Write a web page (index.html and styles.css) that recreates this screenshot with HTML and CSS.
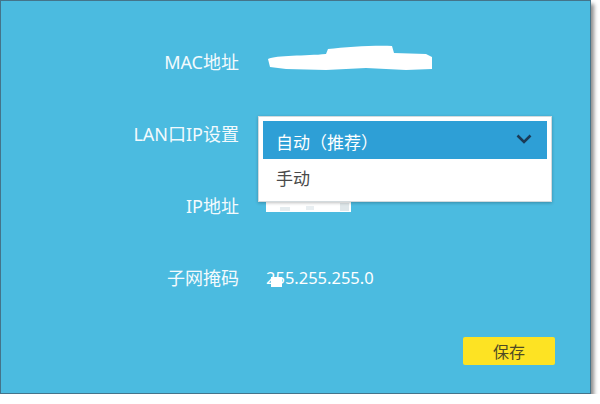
FILE: index.html
```html
<!DOCTYPE html>
<html>
	<head>
		<meta charset="utf-8" />
		<link rel="stylesheet" href="styles.css">
	</head>
	<body>
		<div class="panel">
			<div class="form">
				<div class="label">MAC地址</div>
				<div class="value">
					<svg class="mask-mac" width="170" height="30" viewBox="0 0 170 30">
						<path d="M2,14 C10,10 40,11 60,9 L62,4 C80,2 110,0 126,1 L128,8 L160,9 L166,12 L166,24 L140,25 L100,23 L60,25 L20,24 L4,22 Z" fill="#fff" />
					</svg>
				</div>

				<div class="label">LAN口IP设置</div>
				<div class="value value-select">
					<div class="dropdown">
						<div class="option selected">
							<span>自动（推荐）</span>
							<svg class="check" width="16" height="10" viewBox="0 0 16 10">
								<polyline points="1.5,1.5 8,8 14.5,1.5" fill="none" stroke="#1b3a56" stroke-width="2.6" />
							</svg>
						</div>
						<div class="option">手动</div>
					</div>
				</div>

				<div class="label">IP地址</div>
				<div class="value">
					<svg class="mask-ip" width="86" height="13" viewBox="0 0 86 13">
						<rect x="0" y="0" width="85" height="12" fill="#fff" />
						<rect x="14" y="7" width="10" height="4" fill="#e4ecef" />
						<rect x="40" y="6" width="8" height="4" fill="#e8eef1" />
						<rect x="74" y="3" width="9" height="8" fill="#dfe7ea" />
					</svg>
				</div>

				<div class="label">子网掩码</div>
				<div class="value mask-text">255.255.255.0<span class="blot"></span></div>
			</div>
			<div class="actions">
				<button class="save">保存</button>
			</div>
		</div>
	</body>
</html>
```

FILE: styles.css
```css
body {
	margin: 0;
	background-color: #fff;
	font-family: "Noto Sans", "Noto Sans CJK SC", sans-serif;
}

.panel {
	width: 589px;
	height: 392px;
	background-color: #4bbbe0;
	border: 1px solid #44748a;
	box-shadow: 3px 4px 4px rgba(0, 0, 0, 0.45);
}

.form {
	display: grid;
	grid-template-columns: 238px 1fr;
	grid-auto-rows: 72px;
	column-gap: 27px;
	align-items: center;
	padding-top: 25px;
}

.label {
	text-align: right;
	color: #f3fafd;
	font-size: 18px;
	line-height: 24px;
}

.value {
	color: #fff;
	font-size: 17px;
	line-height: 24px;
}

.value svg {
	display: block;
}

.mask-mac {
	margin-top: -4px;
}

.value-select {
	align-self: stretch;
	position: relative;
}

.dropdown {
	position: absolute;
	top: 18px;
	left: -8px;
	width: 294px;
	box-sizing: border-box;
	padding: 4px;
	background-color: #fff;
	border: 1px solid #d3dadd;
	box-shadow: 0 1px 3px rgba(0, 0, 0, 0.25);
	font-family: "Noto Sans CJK SC", sans-serif;
	font-size: 17px;
}

.option {
	height: 38px;
	display: flex;
	align-items: center;
	justify-content: space-between;
	padding: 0 15px 0 13px;
	color: #4a4a4a;
}

.option.selected {
	background-color: #2e9fd6;
	color: #fff;
	padding-top: 3px;
	box-sizing: border-box;
}

.check {
	margin-top: -5px;
}

.mask-text {
	position: relative;
	font-family: "Noto Sans", sans-serif;
	font-size: 16.5px;
}

.blot {
	position: absolute;
	left: 5px;
	top: 11px;
	width: 11px;
	height: 10px;
	background-color: #fff;
}

.actions {
	display: flex;
	justify-content: flex-end;
	padding: 23px 35px 0 0;
}

.save {
	width: 92px;
	height: 28px;
	border: none;
	border-radius: 2px;
	background-color: #fde323;
	color: #4e4a25;
	font-family: "Noto Sans CJK SC", sans-serif;
	font-size: 16px;
	padding: 0;
}
```
